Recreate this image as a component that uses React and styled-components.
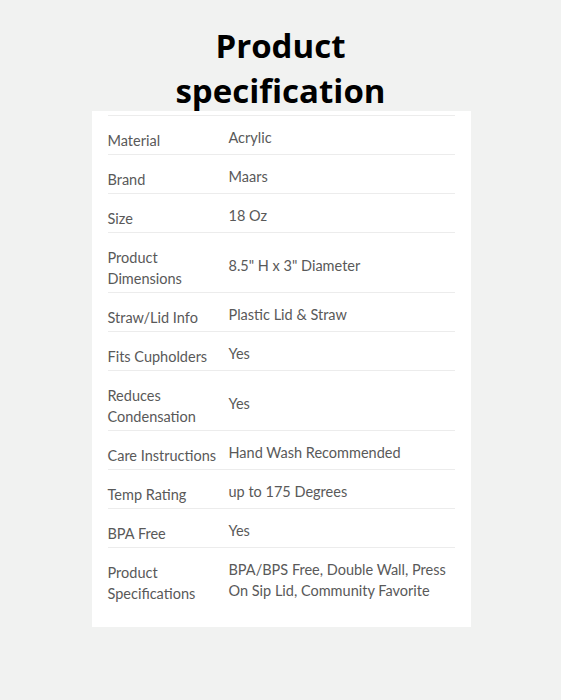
import React from 'react';
import styled, { createGlobalStyle } from 'styled-components';

const specs = [
  ['Material', 'Acrylic'],
  ['Brand', 'Maars'],
  ['Size', '18 Oz'],
  ['Product Dimensions', '8.5" H x 3" Diameter'],
  ['Straw/Lid Info', 'Plastic Lid & Straw'],
  ['Fits Cupholders', 'Yes'],
  ['Reduces Condensation', 'Yes'],
  ['Care Instructions', 'Hand Wash Recommended'],
  ['Temp Rating', 'up to 175 Degrees'],
  ['BPA Free', 'Yes'],
  ['Product Specifications', 'BPA/BPS Free, Double Wall, Press On Sip Lid, Community Favorite'],
];

class App extends React.Component {
  render() {
    return (
      <Page>
        <GlobalStyle />
        <Title>Product<br />specification</Title>
        <Card>
          <Table>
            {specs.map(([label, value], i) => (
              <Row key={i} last={i === specs.length - 1}>
                <Label>{label}</Label>
                <Value>{value}</Value>
              </Row>
            ))}
          </Table>
        </Card>
      </Page>
    );
  }
}

const GlobalStyle = createGlobalStyle`
  html, body {
    margin: 0;
    background: #f1f2f1;
  }
`;
const Page = styled.div`
  width: 561px;
  height: 700px;
  display: flex;
  flex-direction: column;
  align-items: center;
  padding-top: 23px;
  box-sizing: border-box;
`;
const Title = styled.h1`
  margin: 0;
  font-family: "Open Sans", sans-serif;
  font-weight: 700;
  font-size: 33px;
  line-height: 45px;
  color: #000;
  text-align: center;
  position: relative;
  z-index: 1;
`;
const Card = styled.div`
  width: 379px;
  margin-left: 1px;
  margin-top: -2px;
  background: #fff;
  padding: 4px 16px 20px;
  box-sizing: border-box;
`;
const Table = styled.div`
  border-top: 1px solid #ececec;
`;
const Row = styled.div`
  display: grid;
  grid-template-columns: 121px 1fr;
  align-items: center;
  padding: 11px 0 3px;
  border-bottom: ${p => (p.last ? 'none' : '1px solid #ececec')};
  font-family: Lato, sans-serif;
  font-size: 14.5px;
  line-height: 21px;
  color: #595959;
`;
const Label = styled.div`
  padding-top: 3px;
`;
const Value = styled.div`
  padding-bottom: 3px;
`;

export default App;
